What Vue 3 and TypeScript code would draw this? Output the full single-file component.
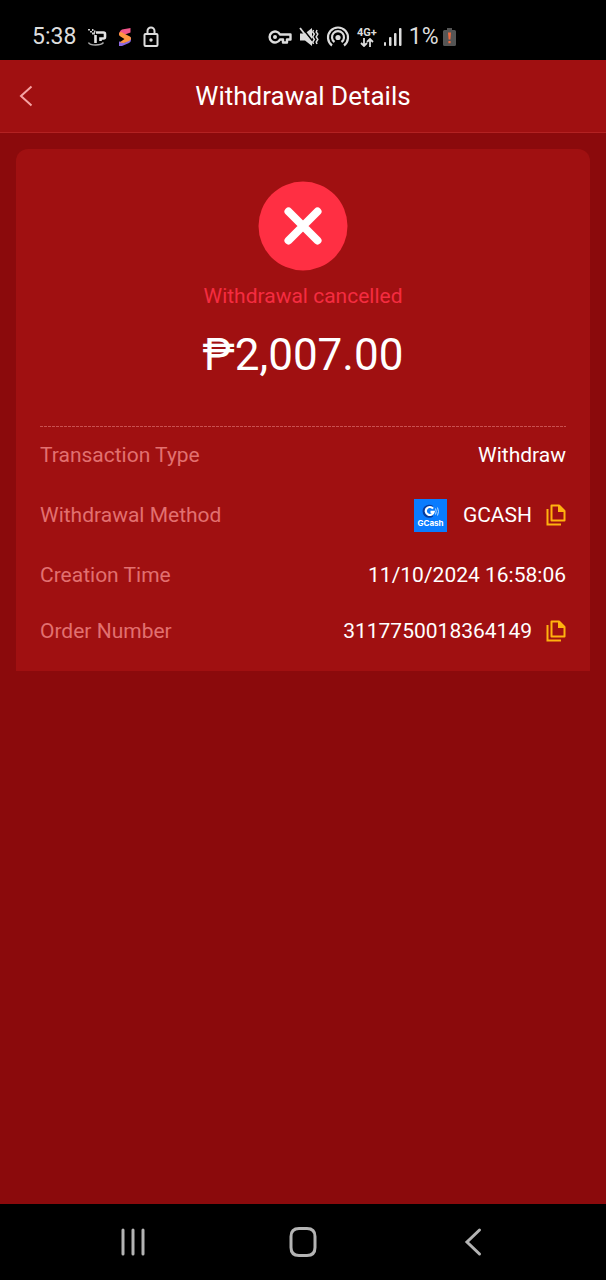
<script setup lang="ts">
interface DetailRow {
  label: string
  value: string
  logo?: boolean
  copy?: boolean
}

const rows: DetailRow[] = [
  { label: 'Transaction Type', value: 'Withdraw' },
  { label: 'Withdrawal Method', value: 'GCASH', logo: true, copy: true },
  { label: 'Creation Time', value: '11/10/2024 16:58:06' },
  { label: 'Order Number', value: '3117750018364149', copy: true },
]

function copyValue(value: string): void {
  void navigator.clipboard?.writeText(value)
}
</script>

<template>
  <div class="screen">
    <div class="status-bar">
      <div class="status-group left">
        <span class="clock">5:38</span>
        <svg width="20" height="22" viewBox="0 0 20 22" fill="none">
          <path d="M1 3h2v1.500h-2zM3 5h2v1.500h-2zM5 3h1.500v2h-1.500zM5 6.500h3v2h-3zM7 4.500h1.500v2h-1.500z" fill="#ccc" />
          <path d="M9 6.500h7.500q1.500 0 1.500 1.500v3q0 1.500-1.500 1.500h-3v2.500M8.500 9v8" stroke="#e4e4e4" stroke-width="2.600" />
          <path d="M1.500 16.500q1 2.500 7 2.500t8-2.500" stroke="#aaa" stroke-width="1.500" />
        </svg>
        <svg width="14" height="20" viewBox="0 0 14 20" fill="none">
          <path d="M1 19V14.500L7 15.500L13 10V13Q13 15 11 16L4 19Z" fill="#8d68e0" />
          <path d="M4 2.500L12.500 1V5.500L7 7.500L2 9Q0 5 4 2.500Z" fill="#f2568c" />
          <path d="M1.500 5.500Q3 4.500 5 6L12 9.500Q14.500 12 11 14L6 16L1.500 15.500L6.500 12L2.500 9.500Q0 8 1.500 5.500Z" fill="#ff9640" />
        </svg>
        <svg width="16" height="22" viewBox="0 0 16 22" fill="none" stroke="#ddd" stroke-width="2">
          <rect x="1.500" y="8" width="13" height="12" rx="1" />
          <path d="M4.500 8V5a3.500 3.500 0 0 1 7 0v3" />
          <circle cx="8" cy="14" r="1.700" fill="#ddd" stroke="none" />
        </svg>
      </div>
      <div class="status-group">
        <svg width="24" height="16" viewBox="0 0 24 16" fill="none" stroke="#ddd" stroke-width="2.400" stroke-linejoin="round">
          <path d="M12 5.500A5.500 5.500 0 1 0 12 10.500H15V13.500H19V10.500H22.500V5.500Z" />
          <circle cx="7" cy="8" r="2" fill="#ddd" stroke="none" />
        </svg>
        <svg width="20" height="20" viewBox="0 0 20 20" fill="none">
          <path d="M1 6.500h5l7-5.500v18l-7-5.500h-5z" fill="#ddd" />
          <path d="M2.500 0L14 14.500" stroke="#000" stroke-width="1.500" />
          <path d="M1 1L13 16.500" stroke="#ddd" stroke-width="1.800" />
          <path d="M14.500 3l-.8 2 1.600 2-1.600 3 1.600 2.500-1.600 2.500.8 2M18 3l-.8 2 1.600 2-1.600 3 1.600 2.500-1.600 2.500.8 2" stroke="#ddd" stroke-width="1.500" />
        </svg>
        <svg width="24" height="22" viewBox="0 0 24 22" fill="none" stroke="#ddd" stroke-width="2.200">
          <path d="M6 19.500A10 10 0 1 1 18 19.500" />
          <path d="M8.500 16A6 6 0 1 1 15.500 16" />
          <circle cx="12" cy="11.500" r="2.600" fill="#ddd" stroke="none" />
        </svg>
        <div class="network">
          <span>4G+</span>
          <svg width="14" height="9" viewBox="0 0 14 9" fill="none" stroke="#ddd" stroke-width="1.800">
            <path d="M4 0v8M1 5l3 3 3-3M10 9V1M7 4l3-3 3 3" />
          </svg>
        </div>
        <svg width="18" height="20" viewBox="0 0 18 20" fill="#ddd">
          <rect x="0" y="15" width="2" height="4" rx="1" />
          <rect x="5" y="10" width="2.500" height="9" rx="1" />
          <rect x="10" y="6" width="2.500" height="13" rx="1" />
          <rect x="15" y="1" width="2.500" height="18" rx="1" />
        </svg>
        <div class="battery">
          <span class="clock">1%</span>
          <svg width="13" height="20" viewBox="0 0 13 20">
            <path d="M4 1h5v2h2.500a1.500 1.500 0 0 1 1.500 1.500v13a1.500 1.500 0 0 1-1.500 1.500h-10a1.500 1.500 0 0 1-1.500-1.500v-13a1.500 1.500 0 0 1 1.500-1.500h2.500z" fill="#555" />
            <path d="M5 5.500h3l-.6 7h-1.800zM5.400 14h2.200v2.200h-2.200z" fill="#f0693f" />
          </svg>
        </div>
      </div>
    </div>

    <header class="header">
      <button class="back" type="button" aria-label="Back">
        <svg width="14" height="22" viewBox="0 0 14 22" fill="none" stroke="#f5a3a3" stroke-width="2">
          <path d="M12.500 1.500L2 11L12.500 20.500" />
        </svg>
      </button>
      <h1>Withdrawal Details</h1>
    </header>

    <main class="content">
      <section class="card">
        <div class="summary">
          <svg width="90" height="90" viewBox="0 0 90 90">
            <circle cx="45" cy="45" r="44.500" fill="#ff2f43" />
            <path d="M30.500 30.500L59.500 59.500M59.500 30.500L30.500 59.500" stroke="#fff" stroke-width="8" stroke-linecap="round" />
          </svg>
          <p class="state">Withdrawal cancelled</p>
          <p class="amount">₱2,007.00</p>
        </div>
        <div class="divider"></div>
        <dl class="details">
          <div v-for="row in rows" :key="row.label" class="row" :class="{ tall: row.logo }">
            <dt>{{ row.label }}</dt>
            <dd>
              <svg v-if="row.logo" class="logo" width="33" height="33" viewBox="0 0 33 33" fill="none">
                <rect width="33" height="33" fill="#0a7cff" />
                <path d="M18.500 8A5.400 5.400 0 1 0 18.500 16.500" stroke="#063a9c" stroke-width="2.400" />
                <path d="M19 9.600A4 4 0 1 0 19.700 12.800H16.500" stroke="#fff" stroke-width="2.200" />
                <path d="M21.500 9.500q1.500 3 0 6M23.500 8.500q2 4 0 8" stroke="#b9dcff" stroke-width="1" />
                <text x="16.500" y="27" text-anchor="middle" class="logo-text">GCash</text>
              </svg>
              <span>{{ row.value }}</span>
              <button
                v-if="row.copy"
                class="copy"
                type="button"
                :aria-label="`Copy ${row.label}`"
                @click="copyValue(row.value)"
              >
                <svg width="20" height="22" viewBox="0 0 20 22" fill="none" stroke="#ffb20f" stroke-width="2">
                  <path d="M5.500 1.500H13L18.500 7V16.500H5.500Z" stroke-linejoin="round" />
                  <path d="M12 1H13.500L19 6.500V8H12Z" fill="#ffb20f" stroke="none" />
                  <path d="M1.500 5V20.500H15" />
                </svg>
              </button>
            </dd>
          </div>
        </dl>
      </section>
    </main>

    <nav class="system-nav">
      <button type="button" aria-label="Recent apps">
        <svg width="26" height="30" viewBox="0 0 26 30" stroke="#b4b4b4" stroke-width="3" stroke-linecap="round">
          <path d="M3 3V27M13 3V27M23 3V27" />
        </svg>
      </button>
      <button type="button" aria-label="Home">
        <svg width="28" height="32" viewBox="0 0 28 32" fill="none" stroke="#b4b4b4" stroke-width="3">
          <path d="M10 2.500H18Q26 2.500 26 10.500V21.500Q26 29.500 18 29.500H10Q2 29.500 2 21.500V10.500Q2 2.500 10 2.500Z" />
        </svg>
      </button>
      <button type="button" aria-label="Back">
        <svg width="18" height="30" viewBox="0 0 18 30" fill="none" stroke="#b4b4b4" stroke-width="3" stroke-linecap="round">
          <path d="M15.500 3L3 15L15.500 27" />
        </svg>
      </button>
    </nav>
  </div>
</template>

<style>
body {
  margin: 0;
  background: #8b0a0c;
}
</style>

<style scoped>
.screen {
  display: flex;
  flex-direction: column;
  min-height: 100vh;
  background: #8b0a0c;
  color: #fff;
  font-family: Roboto, "Liberation Sans", sans-serif;
}

button {
  display: flex;
  align-items: center;
  justify-content: center;
  padding: 0;
  border: 0;
  background: none;
  cursor: pointer;
}

svg {
  display: block;
  flex: none;
}

.status-bar {
  display: grid;
  grid-template-columns: 236px 1fr;
  height: 60px;
  padding: 14px 32px 0;
  box-sizing: border-box;
  background: #000;
  color: #ddd;
}

.status-group {
  display: flex;
  align-items: center;
  gap: 7px;
  white-space: nowrap;
}

.left {
  gap: 11px;
}

.clock {
  font-size: 23px;
  line-height: 28px;
}

.network {
  display: flex;
  flex-direction: column;
  align-items: center;
  font-size: 11px;
  font-weight: 700;
  line-height: 10px;
}

.battery {
  display: flex;
  align-items: center;
  gap: 4px;
}

.header {
  display: grid;
  grid-template-columns: 52px 1fr 52px;
  align-items: center;
  height: 73px;
  box-sizing: border-box;
  border-bottom: 1px solid #b32222;
  background: #a01011;
}

.back {
  height: 100%;
}

h1 {
  margin: 0;
  font-size: 26px;
  font-weight: 400;
  line-height: 32px;
  text-align: center;
}

.content {
  flex: 1;
  padding: 16px;
}

.card {
  padding: 32px 24px 12px;
  border-radius: 12px 12px 0 0;
  background: #a01011;
}

.summary {
  display: flex;
  flex-direction: column;
  align-items: center;
  padding-bottom: 43px;
}

.state {
  margin: 12px 0 0;
  color: #f52c40;
  font-size: 21px;
  line-height: 26px;
}

.amount {
  margin: 18px 0 0;
  font-size: 44px;
  line-height: 56px;
}

.divider {
  height: 1px;
  background: repeating-linear-gradient(90deg, #c95050 0 3px, transparent 3px 4px);
}

.details {
  margin: 0;
}

.row {
  display: flex;
  align-items: center;
  justify-content: space-between;
  height: 56px;
  font-size: 21px;
  line-height: 28px;
}

.tall {
  height: 64px;
}

dt {
  color: #e27070;
}

dd {
  display: flex;
  align-items: center;
  margin: 0;
}

.logo {
  margin-right: 16px;
}

.logo-text {
  fill: #fff;
  font-family: Inter, sans-serif;
  font-size: 8px;
  font-weight: 700;
}

.copy {
  margin-left: 14px;
}

.system-nav {
  display: grid;
  grid-template-columns: repeat(3, 28%);
  justify-content: center;
  height: 76px;
  background: #000;
}
</style>
